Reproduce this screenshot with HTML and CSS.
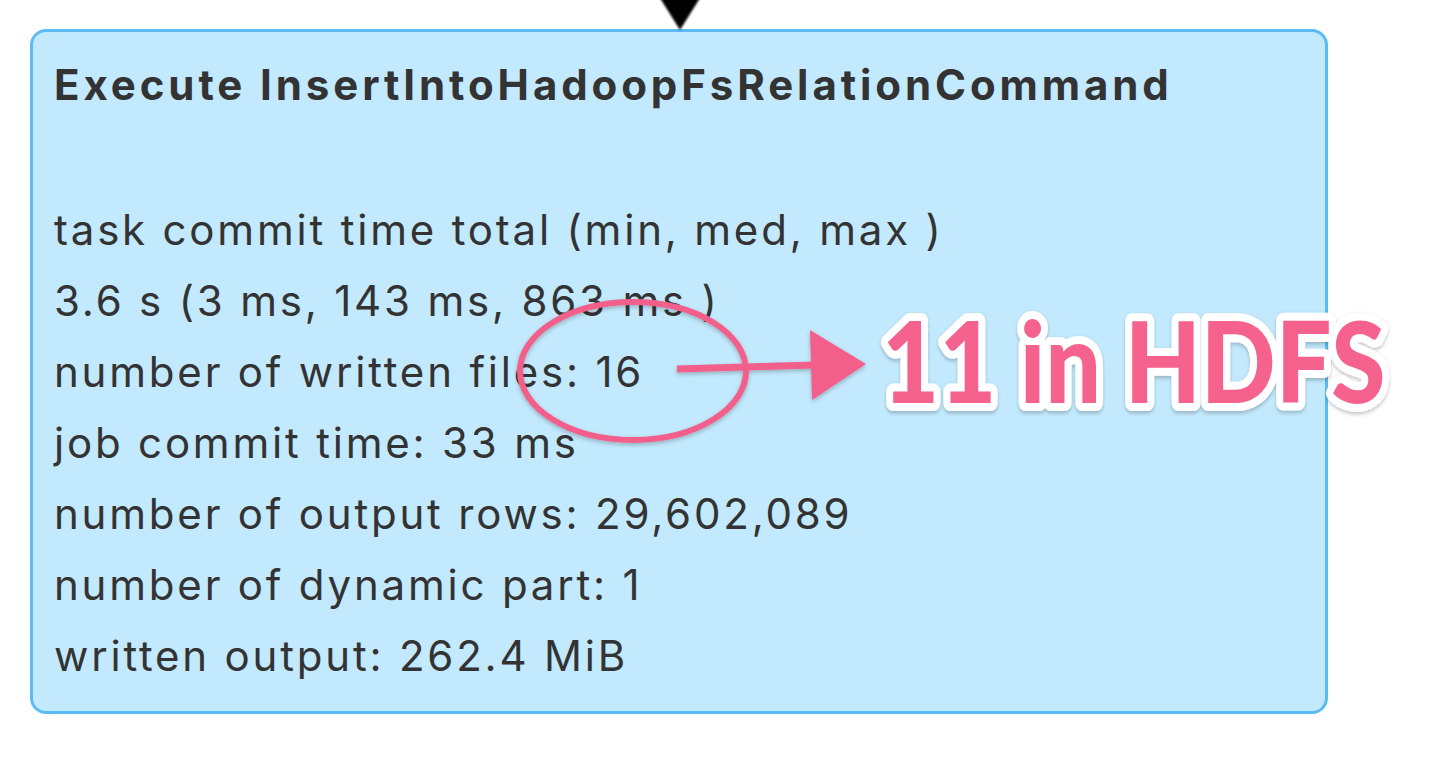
FILE: index.html
```html
<!DOCTYPE html>
<html>
<head>
<meta charset="utf-8">
<title>Execute InsertIntoHadoopFsRelationCommand</title>
<link rel="stylesheet" href="styles.css">
</head>
<body>
<div class="stage">
  <!-- end of the incoming edge -->
  <svg class="edge-tip" width="60" height="34" viewBox="0 0 60 34">
    <polygon points="10,0 50,0 30,32" fill="#000"/>
  </svg>

  <div class="node">
    <div class="node-title">Execute InsertIntoHadoopFsRelationCommand</div>
    <div class="node-gap"></div>
    <div class="metric">task commit time total (min, med, max )</div>
    <div class="metric">3.6 s (3 ms, 143 ms, 863 ms )</div>
    <div class="metric">number of written files: 16</div>
    <div class="metric">job commit time: 33 ms</div>
    <div class="metric">number of output rows: 29,602,089</div>
    <div class="metric">number of dynamic part: 1</div>
    <div class="metric">written output: 262.4 MiB</div>
  </div>

  <!-- annotation drawn on top -->
  <svg class="note" width="1430" height="758" viewBox="0 0 1430 758">
    <defs>
      <filter id="sh" x="-10%" y="-10%" width="120%" height="130%">
        <feDropShadow dx="0" dy="2" stdDeviation="2" flood-color="#000" flood-opacity="0.25"/>
      </filter>
    </defs>
    <g filter="url(#sh)">
      <ellipse cx="633" cy="371" rx="113" ry="69" fill="none" stroke="#f25f8a" stroke-width="6"/>
      <line x1="677" y1="369" x2="815" y2="365" stroke="#f25f8a" stroke-width="7"/>
      <polygon points="810,330 866,364 812,400" fill="#f25f8a"/>
    </g>
    <g transform="translate(882,403) scale(0.88,1)" filter="url(#sh)">
      <text class="note-text" x="0" y="0">11 in HDFS</text>
    </g>
  </svg>
</div>
</body>
</html>
```

FILE: styles.css
```css
body{margin:0;background:#fff;}
.stage{position:relative;width:1430px;height:758px;overflow:hidden;}
.edge-tip{position:absolute;left:650px;top:-2px;filter:blur(1px);}

.node{margin:29px 0 0 30px;width:1292px;height:679px;
  background:#c2e9fd;border:3px solid #5cbbf4;border-radius:16px;
  font-family:Inter,"Liberation Sans",sans-serif;color:#333;}
.node-title,.metric{padding-left:21px;font-size:42px;line-height:71px;white-space:nowrap;letter-spacing:2.8px;}
.node-title{font-weight:700;margin-top:17px;letter-spacing:3.9px;}
.node-gap{height:74px;}

.note{position:absolute;left:0;top:0;}
.note-text{font-family:Lato,"Open Sans",sans-serif;font-weight:900;font-size:112px;
  fill:#f5628d;stroke:#fff;stroke-width:16px;stroke-linejoin:round;paint-order:stroke fill;}
```
